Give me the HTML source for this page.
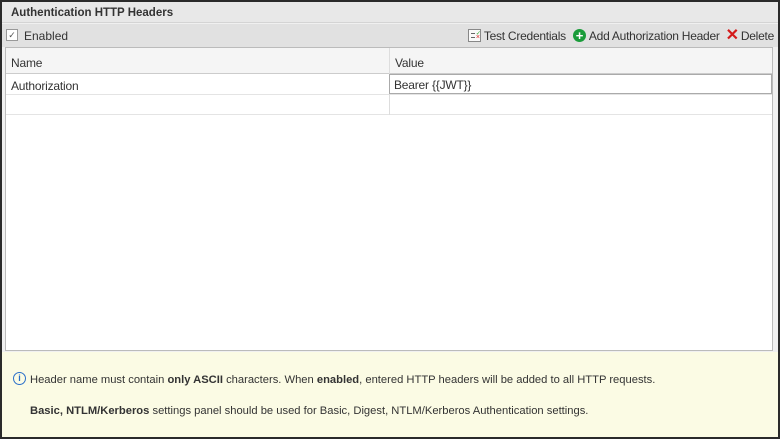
<!DOCTYPE html>
<html><head><style>
*{margin:0;padding:0;box-sizing:border-box}
body{width:780px;height:439px;font-family:"Liberation Sans",sans-serif;font-size:11px;color:#333;background:#fff;overflow:hidden}
.frame{position:absolute;left:0;top:0;width:780px;height:439px;border:2px solid #2a2a2a;background:#f0f0f0}
.title{position:absolute;left:0;top:0;width:776px;height:21px;background:#e8e8e8;font-weight:bold;font-size:11.5px;padding:5px 9px 0;color:#333;border-bottom:1px solid #d4d4d4}
.tb{position:absolute;left:0;top:22px;width:776px;height:23px;background:#e1e1e1}
.cb{position:absolute;left:4px;top:5px;width:12px;height:12px;border:1px solid #999;background:#fff;font-size:9px;line-height:10px;text-align:center;color:#555}
.tb .en{position:absolute;left:22px;top:5px;font-size:12px}
.right{position:absolute;right:4px;top:3px;display:flex;align-items:center;height:17px;font-size:12px;letter-spacing:-0.25px}
.grid{position:absolute;left:3px;top:45px;width:768px;height:304px;background:#fff;border:1px solid #bbb}
.hd{position:absolute;left:0;top:0;width:766px;height:26px;background:#f5f5f5;border-bottom:1px solid #ccc}
.cell{position:absolute;padding:5px 5px;font-size:12px;letter-spacing:-0.2px}
.vl{position:absolute;left:383px;top:0;width:1px;height:67px;background:#ddd}
.foot{position:absolute;left:0;top:350px;width:776px;height:85px;background:#fbfbe4;font-size:11.2px}
b{color:#333}
</style></head><body>
<div class="frame">
<div class="title">Authentication HTTP Headers</div>
<div class="tb">
<div class="cb">✓</div><span class="en">Enabled</span>
<div class="right">
<div style="position:relative;width:13px;height:13px;border:1px solid #888;background:#fafafa;margin-right:3px"><div style="position:absolute;left:2px;top:3px;width:4px;height:1px;background:#666"></div><div style="position:absolute;left:2px;top:7px;width:4px;height:1px;background:#666"></div><div style="position:absolute;left:7px;top:1px;font-size:6px;color:#3a3;line-height:6px">✓</div><div style="position:absolute;left:7px;top:5px;font-size:7px;color:#d22;line-height:6px">×</div></div>
<span>Test Credentials</span>
<div style="width:13px;height:13px;border-radius:50%;background:#1a9c3a;color:#fff;font-weight:bold;font-size:13px;line-height:13px;text-align:center;margin:0 3px 0 7px">+</div>
<span>Add Authorization Header</span>
<span style="color:#d41a1a;font-weight:bold;font-size:16px;margin:0 2px 0 6px;line-height:16px">✕</span>
<span>Delete</span>
</div>
</div>
<div class="grid">
<div class="hd"></div>
<div class="cell" style="left:0;top:3px">Name</div>
<div class="cell" style="left:384px;top:3px">Value</div>
<div style="position:absolute;left:0;top:46px;width:766px;height:1px;background:#e4e4e4"></div>
<div style="position:absolute;left:0;top:66px;width:766px;height:1px;background:#e4e4e4"></div>
<div class="vl"></div>
<div class="cell" style="left:0;top:26px">Authorization</div>
<div style="position:absolute;left:383px;top:26px;width:383px;height:20px;border:1px solid #aaa;padding:3px 4px;font-size:12px;letter-spacing:-0.2px">Bearer {{JWT}}</div>
</div>
<div class="foot">
<div style="position:absolute;left:11px;top:20px;width:13px;height:13px;border:1.3px solid #2a6fc9;border-radius:50%;color:#2a6fc9;font-size:9px;font-weight:bold;line-height:11px;text-align:center">i</div>
<div style="position:absolute;left:28px;top:22px">Header name must contain <b>only ASCII</b> characters. When <b>enabled</b>, entered HTTP headers will be added to all HTTP requests.</div>
<div style="position:absolute;left:28px;top:53px"><b>Basic, NTLM/Kerberos</b> settings panel should be used for Basic, Digest, NTLM/Kerberos Authentication settings.</div>
</div>
</div>
</body></html>
